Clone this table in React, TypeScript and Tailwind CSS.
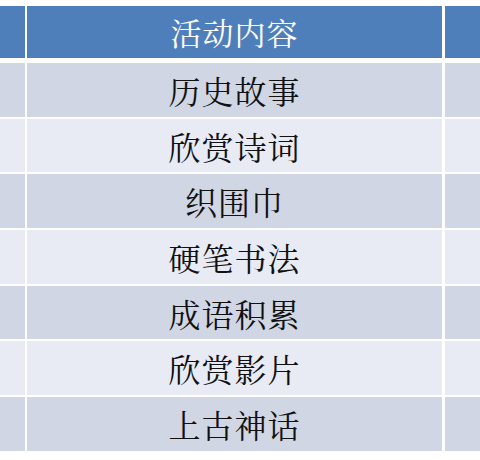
const rows = ["历史故事", "欣赏诗词", "织围巾", "硬笔书法", "成语积累", "欣赏影片", "上古神话"];

const font = {
  fontFamily: '"Noto Serif CJK SC", "Noto Sans CJK SC", serif',
};

export default function App() {
  return (
    <div className="w-[480px] h-[460px] bg-white pt-[6px] overflow-hidden" style={font}>
      {/* header */}
      <div className="flex h-[52px] gap-[2px]">
        <div className="w-[25px] bg-[#4f7fbb]" />
        <div className="flex w-[415px] items-center justify-center bg-[#4f7fbb] text-[31px] text-white tracking-[1px]">
          活动内容
        </div>
        <div className="ml-[1px] flex-1 bg-[#4f7fbb]" />
      </div>

      <div className="mt-[5px] flex flex-col gap-[2px]">
        {rows.map((t, i) => {
          const bg = i % 2 === 0 ? "bg-[#d0d6e4]" : "bg-[#e8ebf4]";
          return (
            <div key={t} className="flex h-[53.7px] gap-[2px]">
              <div className={`w-[25px] ${bg}`} />
              <div
                className={`flex w-[415px] items-center justify-center text-[32px] text-[#111] tracking-[1px] ${bg}`}
              >
                {t}
              </div>
              <div className={`ml-[1px] flex-1 ${bg}`} />
            </div>
          );
        })}
      </div>
    </div>
  );
}
